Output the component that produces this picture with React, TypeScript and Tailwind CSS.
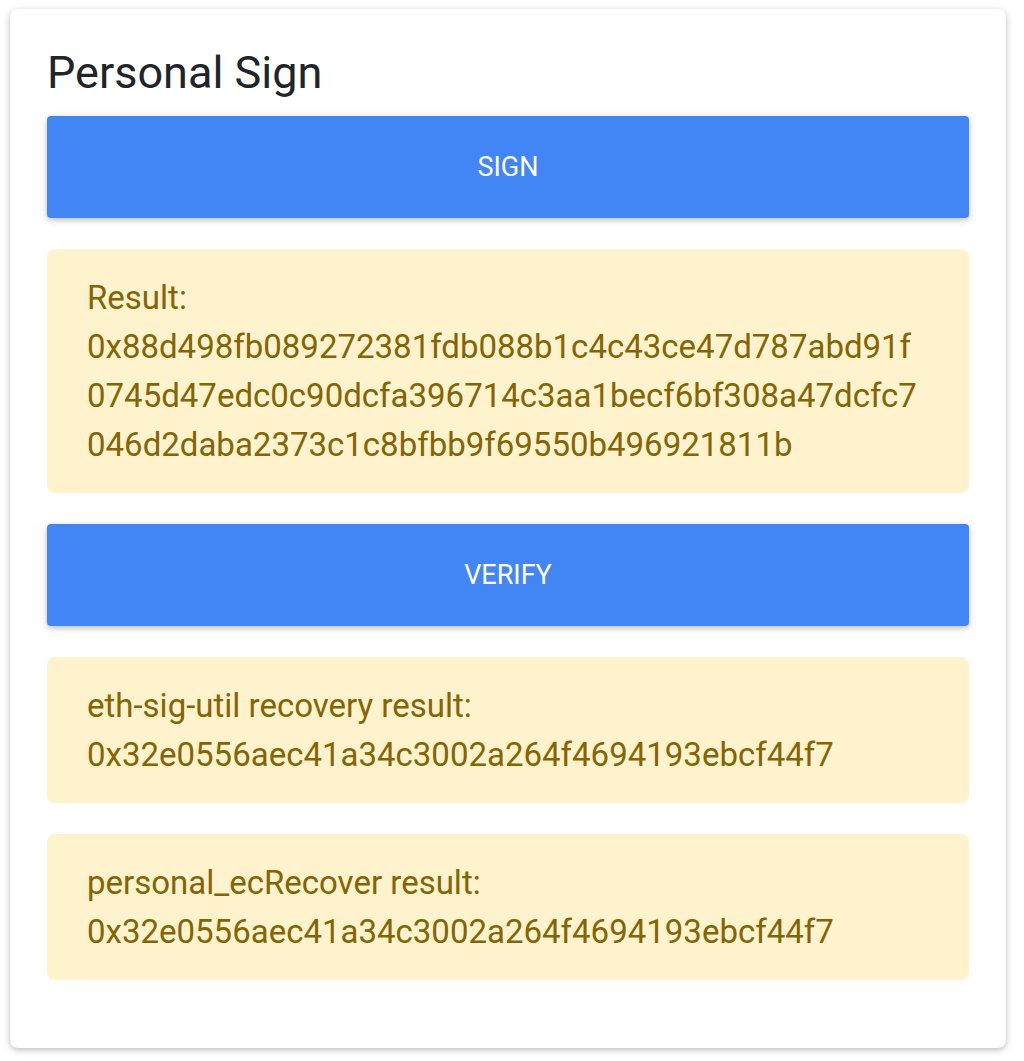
import React from "react";

function Alert({ lines }: { lines: string[] }) {
  return (
    <div className="rounded-[8px] bg-[#fff3cd] px-[40px] py-[24px] text-[33px] leading-[49px] text-[#856404]">
      {lines.map((l, i) => (
        <div key={i} className="whitespace-nowrap">
          {l}
        </div>
      ))}
    </div>
  );
}

function Btn({ label }: { label: string }) {
  return (
    <button className="flex h-[102px] w-full items-center justify-center rounded-[4px] bg-[#4285f4] text-[27px] uppercase text-white shadow-[0_2px_5px_0_rgba(0,0,0,0.16),0_2px_10px_0_rgba(0,0,0,0.12)]">
      {label}
    </button>
  );
}

export default function App() {
  return (
    <div
      className="min-h-[1061px] bg-white pl-[10px] pr-[18px] pt-[9px]"
      style={{ fontFamily: "Roboto, 'Noto Sans', sans-serif" }}
    >
      <div className="flex flex-col rounded-[8px] bg-white px-[37px] pb-[37px] pt-[37px] shadow-[0_2px_5px_0_rgba(0,0,0,0.16),0_2px_10px_0_rgba(0,0,0,0.12)]">
        <h4 className="mb-[17px] text-[45px] leading-[53px] text-[#212529]">Personal Sign</h4>
        <div className="flex flex-col gap-[31px] pb-[31px]">
          <Btn label="Sign" />
          <Alert
            lines={[
              "Result:",
              "0x88d498fb089272381fdb088b1c4c43ce47d787abd91f",
              "0745d47edc0c90dcfa396714c3aa1becf6bf308a47dcfc7",
              "046d2daba2373c1c8bfbb9f69550b496921811b",
            ]}
          />
          <Btn label="Verify" />
          <Alert
            lines={[
              "eth-sig-util recovery result:",
              "0x32e0556aec41a34c3002a264f4694193ebcf44f7",
            ]}
          />
          <Alert
            lines={[
              "personal_ecRecover result:",
              "0x32e0556aec41a34c3002a264f4694193ebcf44f7",
            ]}
          />
        </div>
      </div>
    </div>
  );
}
